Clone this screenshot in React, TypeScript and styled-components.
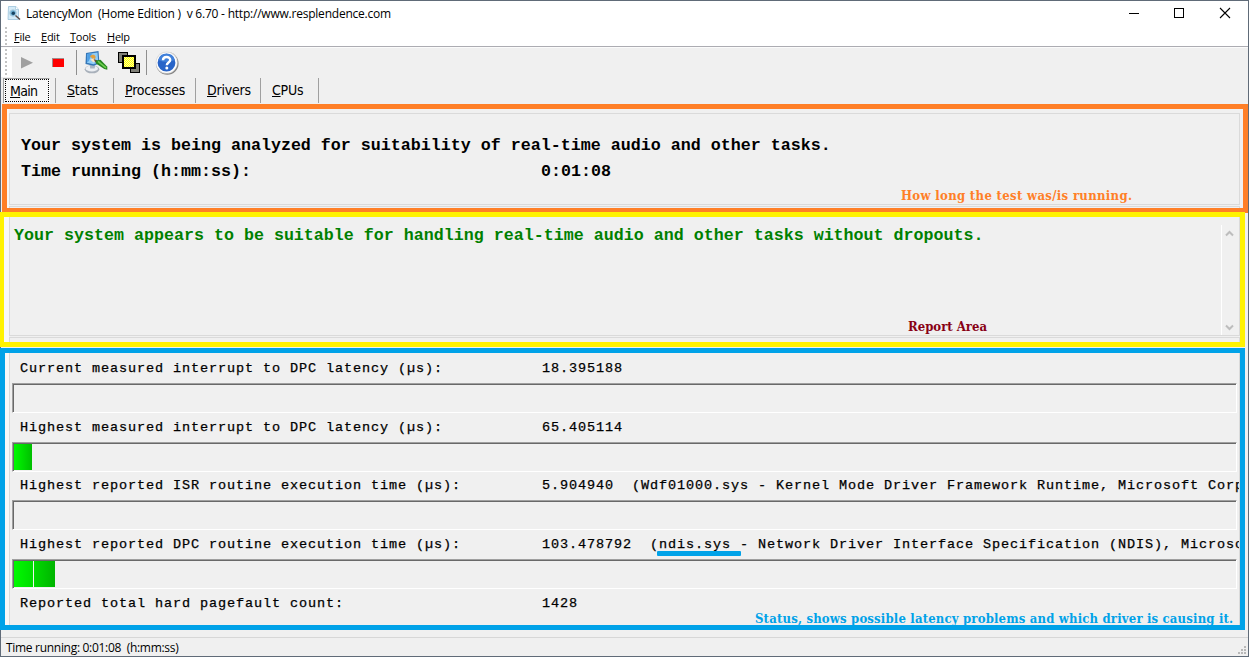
import React from "react";
import styled, { createGlobalStyle } from "styled-components";

const ui = `"Open Sans", "Noto Sans", sans-serif`;
const tahoma = `"DejaVu Sans Condensed", "DejaVu Sans", sans-serif`;
const mono = `"Liberation Mono", monospace`;
const serif = `"DejaVu Serif Condensed", "DejaVu Serif", serif`;

const Global = createGlobalStyle`
  * { box-sizing: border-box; }
  body { margin: 0; overflow: hidden; }
`;

const Window = styled.div`
  width: 1249px;
  height: 657px;
  border: 1px solid #606b78;
  background: #f0f0f0;
  display: flex;
  flex-direction: column;
  color: #000;
  font-family: ${ui};
  svg {
    display: block;
    flex: none;
  }
`;

const TitleBar = styled.div`
  height: 26px;
  flex: none;
  background: #fff;
  display: flex;
  padding-left: 6px;
`;
const AppIcon = styled.svg`
  margin-top: 4px;
`;
const TitleText = styled.span`
  white-space: pre;
  font-size: 12px;
  line-height: 26px;
  letter-spacing: -0.22px;
  margin-left: 5px;
  flex: 1;
`;

const MenuBar = styled.div`
  height: 20px;
  flex: none;
  background: #fff;
  border-bottom: 1px solid #acacb2;
  display: flex;
  padding-left: 4px;
`;
const Gripper = styled.div<{ $h: number }>`
  width: 2px;
  flex: none;
  height: ${(p) => p.$h}px;
  background: repeating-linear-gradient(#c3c3c3 0 2px, transparent 2px 4px);
`;
const MenuItems = styled.div`
  display: flex;
  padding-left: 7px;
`;
const MenuItem = styled.span<{ $w: number }>`
  font-size: 11px;
  letter-spacing: -0.25px;
  line-height: 19px;
  width: ${(p) => p.$w}px;
`;

const ToolBar = styled.div`
  height: 30px;
  display: flex;
  border-top: 1px solid #fbfbfb;
  flex: none;
`;
const GripArea = styled.div`
  width: 11px;
  height: 29px;
  background: #fff;
  padding: 1px 0 0 4px;
`;
const Tool = styled.span<{ $gap: number; $drop: number }>`
  margin-left: ${(p) => p.$gap}px;
  margin-top: ${(p) => p.$drop}px;
`;
const ToolDivider = styled.span<{ $gap: number }>`
  width: 1px;
  height: 25px;
  margin: 2px 0 0 ${(p) => p.$gap}px;
  background: #8f8f8f;
`;

const TabRow = styled.div`
  height: 27px;
  display: flex;
  padding: 1px 0 0 2px;
  flex: none;
  font-family: ${tahoma};
  font-size: 14px;
  letter-spacing: -0.22px;
`;
const Tab = styled.div<{ $w: number }>`
  width: ${(p) => p.$w}px;
  height: 25px;
  padding-left: 11px;
  border-right: 1px solid #a0a0a0;
  line-height: 24px;
`;
const TabGap = styled.div`
  width: 6px;
  height: 25px;
  border-right: 1px solid #a0a0a0;
`;
const ActiveTab = styled.div`
  width: 47px;
  height: 25px;
  border-left: 1px solid #a0a0a0;
  border-top: 1px solid #a0a0a0;
  border-right: 1px solid #fff;
  background: #f8f8f8;
  padding-left: 1px;
  line-height: 23px;
  letter-spacing: -0.7px;
`;
const Focus = styled.div`
  border: 1px dotted #000;
  height: 23px;
  padding-left: 4px;
`;

const Frame = styled.section<{
  $color: string;
  $left: number;
  $edge: number;
  $w: number;
  $h: number;
  $gap: number;
}>`
  position: relative;
  flex: none;
  width: ${(p) => p.$w}px;
  height: ${(p) => p.$h}px;
  margin-left: ${(p) => p.$left - 1}px;
  margin-top: ${(p) => p.$gap}px;
  border: 5px solid ${(p) => p.$color};
  border-left-width: ${(p) => p.$edge}px;
  display: flex;
  flex-direction: column;
  padding-left: ${(p) => 9 - p.$left - p.$edge}px;
  background: linear-gradient(90deg, #f8f8f8 ${(p) => 9 - p.$left - p.$edge}px, #f0f0f0 0);
`;
const Panel = styled.div<{ $h: number; $edges: string; $gap?: number }>`
  width: 1231px;
  height: ${(p) => p.$h}px;
  margin-top: ${(p) => p.$gap ?? 0}px;
  border-style: solid;
  border-color: #dadada;
  border-width: ${(p) => p.$edges};
  flex: none;
  display: flex;
  flex-direction: column;
`;
const Note = styled.div<{ $color: string; $x: number; $y: number; $spacing: number }>`
  position: absolute;
  left: ${(p) => p.$x}px;
  top: ${(p) => p.$y}px;
  white-space: nowrap;
  font: bold 13px/16px ${serif};
  letter-spacing: ${(p) => p.$spacing}px;
  color: ${(p) => p.$color};
`;
const BigLine = styled.div<{ $color?: string }>`
  display: flex;
  font: bold 16.67px/26px ${mono};
  color: ${(p) => p.$color ?? "#000"};
  white-space: pre;
`;
const BigLabel = styled.span`
  width: 520px;
`;
const Summary = styled.div`
  padding: 19px 0 0 11px;
`;
const Report = styled.div`
  display: flex;
  justify-content: space-between;
  padding: 6px 0 0 4px;
`;
const ScrollBar = styled.div`
  margin-top: 2px;
  width: 18px;
  height: 110px;
  border-left: 1px solid #fff;
  display: flex;
  flex-direction: column;
  justify-content: space-between;
  padding: 5px 0 4px 3px;
`;

const Reading = styled.div<{ $h: number; $line: number }>`
  height: ${(p) => p.$h}px;
  flex: none;
  display: flex;
  padding-left: 10px;
  white-space: pre;
  font: 13.5px/${(p) => p.$line}px ${mono};
  letter-spacing: 0.898px;
  -webkit-text-stroke: 0.25px #000;
`;
const ReadingLabel = styled.span`
  width: 522px;
  flex: none;
`;
const Value = styled.span`
  flex: 1;
  min-width: 0;
  overflow: hidden;
`;
const Meter = styled.div`
  flex: none;
  width: 1225px;
  height: 30px;
  margin-left: 2px;
  border: 1px solid #fff;
  border-top-color: #a0a0a0;
  border-left-color: #a0a0a0;
  box-shadow: inset 1px 1px 0 #696969;
  padding: 1px 0 1px 1px;
  display: flex;
  gap: 1px;
`;
const Block = styled.div<{ $w: number; $from: string; $to: string }>`
  width: ${(p) => p.$w}px;
  background: linear-gradient(90deg, ${(p) => p.$from}, ${(p) => p.$to});
`;
const Marker = styled.div`
  position: absolute;
  left: 652px;
  top: 198px;
  width: 84px;
  height: 5px;
  border-radius: 1px;
  background: #00a2e8;
`;
const StatusBar = styled.div`
  margin-top: 7px;
  height: 19px;
  border-top: 1px solid #d7d7d7;
  display: flex;
  justify-content: space-between;
  align-items: flex-start;
  padding: 0 2px 0 5px;
  font-size: 12px;
  line-height: 20px;
  letter-spacing: -0.3px;
  white-space: pre;
`;
const Grip = styled.svg`
  margin-top: 8px;
`;

const LogoIcon = () => (
  <AppIcon width="14" height="16" viewBox="0 0 14 16">
    <path d="M1.500 1.500h7.500l2.500 3v10h-10.500z" fill="#d4ebf8" stroke="#9cc3da" strokeWidth=".8" />
    <path d="M8.500 1.500v3h3" fill="#fff" stroke="#9fc4d8" strokeWidth=".7" />
    <circle cx="6" cy="8" r="3.300" fill="#6fb0d4" stroke="#b7d3e2" />
    <circle cx="6.300" cy="8.300" r="1.700" fill="#17425f" />
    <path d="M8.500 10.500l4.500 4" stroke="#5a4a46" strokeWidth="1.500" />
  </AppIcon>
);

const MinimizeIcon = () => (
  <svg width="46" height="26" viewBox="0 0 46 26" shapeRendering="crispEdges">
    <path d="M19 12.500h10" stroke="#000" />
  </svg>
);
const MaximizeIcon = () => (
  <svg width="46" height="26" viewBox="0 0 46 26" shapeRendering="crispEdges">
    <path d="M18.500 7.500h9v9h-9z" stroke="#000" fill="none" />
  </svg>
);
const CloseIcon = () => (
  <svg width="46" height="26" viewBox="0 0 46 26">
    <path d="M18 7l10 10M28 7l-10 10" stroke="#000" strokeWidth="1.100" />
  </svg>
);

const PlayIcon = () => (
  <svg width="12" height="12" viewBox="0 0 12 12">
    <path d="M0 0L12 5.700L0 11.500z" fill="#a0a0a0" />
  </svg>
);
const StopIcon = () => (
  <svg width="12" height="9" viewBox="0 0 12 9" shapeRendering="crispEdges">
    <path d="M0 0h12v9h-12z" fill="#a08c8c" />
    <path d="M1 1h11v8h-11z" fill="#f00" />
  </svg>
);
const ComputerIcon = () => (
  <svg width="24" height="23" viewBox="0 0 24 23">
    <ellipse cx="8" cy="18.300" rx="7.300" ry="4" fill="#a9b1bb" />
    <ellipse cx="7.800" cy="17.500" rx="6.200" ry="3" fill="#eceff3" />
    <path d="M5.500 12h6l-.8 5.500h-4.500z" fill="#a9b6c4" />
    <path d="M2 2l12.500-2l1 12.500l-6 2.200l-8-1.700z" fill="#3477b8" />
    <path d="M3.200 3l10.300-1.500l.8 10l-5 1.700l-6.300-1.400z" fill="#8fcdf8" />
    <path d="M3.200 3l5-.7l-3.500 8l-1.600 1z" fill="#4f9fe4" />
    <path d="M6 5.500c1-2.500 5-2.500 5.500 0c.5 2-1 3-2.500 2.500z" fill="#e0a040" />
    <path d="M6.300 8.500l3.500-1l2 2l-2.300 2z" fill="#fbe6c4" />
    <path d="M9.500 8l4 1.500l-1.500 2.700z" fill="#604b36" />
    <path d="M12 9.500l4.500-.8l6.800 7v3l-3-.7l-8.300-5.500z" fill="#26871f" />
    <path d="M14 10.300l8 6.500" stroke="#6fd050" strokeWidth="1.600" />
  </svg>
);

const checks: [number, number][] = [];
for (let y = 0; y < 10; y += 1) {
  for (let x = y % 2; x < 10; x += 2) checks.push([x, y]);
}
const WindowsIcon = () => (
  <svg width="22" height="21" viewBox="0 0 22 21" shapeRendering="crispEdges">
    <path d="M0 0h10v11h-10zM12 11h10v10h-10z" fill="#000" />
    <path d="M1 1h8v9h-8zM13 12h8v8h-8z" fill="#808078" />
    <path d="M4 3h14v14h-14z" fill="#000" />
    <path d="M6 5h10v10h-10z" fill="#ffff00" />
    {checks.map(([x, y]) => (
      <rect key={`${x}-${y}`} x={6 + x} y={5 + y} width="1" height="1" fill="#ffffa0" />
    ))}
  </svg>
);
const HelpIcon = () => (
  <svg width="24" height="24" viewBox="0 0 24 24">
    <circle cx="12.300" cy="12.400" r="11.300" fill="#858585" />
    <circle cx="11.600" cy="11.600" r="11" fill="#dedede" />
    <circle cx="11.700" cy="11.700" r="10.200" fill="#fff" />
    <circle cx="11.500" cy="11.700" r="8.900" fill="#2864c8" />
    <path d="M3.300 9a8.500 8.500 0 0 1 16.500 0q-8 4-16.500 0z" fill="#4080da" />
    <path
      d="M8 9.300c0-4.400 7.200-4.200 7.200-.3c0 2.600-3.400 2.500-3.400 5.200"
      fill="none"
      stroke="#fff"
      strokeWidth="2.400"
    />
    <circle cx="11.800" cy="17" r="1.500" fill="#fff" />
  </svg>
);

const ArrowUp = () => (
  <svg width="9" height="7" viewBox="0 0 9 7">
    <path d="M1 5.500l3.500-3.500l3.500 3.500" fill="none" stroke="#bdbdbd" strokeWidth="2" />
  </svg>
);
const ArrowDown = () => (
  <svg width="9" height="7" viewBox="0 0 9 7">
    <path d="M1 1.500l3.500 3.500l3.500-3.500" fill="none" stroke="#bdbdbd" strokeWidth="2" />
  </svg>
);

const menus = [
  { label: "File", w: 27 },
  { label: "Edit", w: 29 },
  { label: "Tools", w: 37 },
  { label: "Help", w: 30 },
];
const tabs = [
  { label: "Stats", w: 58 },
  { label: "Processes", w: 82 },
  { label: "Drivers", w: 65 },
  { label: "CPUs", w: 58 },
];

interface Row {
  label: string;
  value: string;
  h: number;
  line: number;
  blocks?: { w: number; from: string; to: string }[];
}
const rows: Row[] = [
  { label: "Current measured interrupt to DPC latency (µs):", value: "18.395188", h: 30, line: 31, blocks: [] },
  {
    label: "Highest measured interrupt to DPC latency (µs):",
    value: "65.405114",
    h: 29,
    line: 29,
    blocks: [{ w: 18, from: "#00fa00", to: "#00be00" }],
  },
  {
    label: "Highest reported ISR routine execution time (µs):",
    value: "5.904940  (Wdf01000.sys - Kernel Mode Driver Framework Runtime, Microsoft Corp",
    h: 28,
    line: 27,
    blocks: [],
  },
  {
    label: "Highest reported DPC routine execution time (µs):",
    value: "103.478792  (ndis.sys - Network Driver Interface Specification (NDIS), Microso",
    h: 29,
    line: 29,
    blocks: [
      { w: 19, from: "#00fa00", to: "#00dc00" },
      { w: 21, from: "#00da00", to: "#00b400" },
    ],
  },
  { label: "Reported total hard pagefault count:", value: "1428", h: 29, line: 29 },
];

const Mnemonic = ({ text }: { text: string }) => (
  <>
    <u>{text[0]}</u>
    {text.slice(1)}
  </>
);

export default function App() {
  return (
    <>
      <Global />
      <Window>
        <TitleBar>
          <LogoIcon />
          <TitleText>{"LatencyMon  (Home Edition )  v 6.70 - http://www.resplendence.com"}</TitleText>
          <MinimizeIcon />
          <MaximizeIcon />
          <CloseIcon />
        </TitleBar>
        <MenuBar>
          <Gripper $h={18} />
          <MenuItems>
            {menus.map((m) => (
              <MenuItem key={m.label} $w={m.w}>
                <Mnemonic text={m.label} />
              </MenuItem>
            ))}
          </MenuItems>
        </MenuBar>
        <ToolBar>
          <GripArea>
            <Gripper $h={28} />
          </GripArea>
          <Tool $gap={9} $drop={9}><PlayIcon /></Tool>
          <Tool $gap={19} $drop={10}><StopIcon /></Tool>
          <ToolDivider $gap={12} />
          <Tool $gap={7} $drop={3}><ComputerIcon /></Tool>
          <Tool $gap={10} $drop={4}><WindowsIcon /></Tool>
          <ToolDivider $gap={6} />
          <Tool $gap={8} $drop={3}><HelpIcon /></Tool>
        </ToolBar>
        <TabRow>
          <ActiveTab>
            <Focus>
              <Mnemonic text="Main" />
            </Focus>
          </ActiveTab>
          <TabGap />
          {tabs.map((t) => (
            <Tab key={t.label} $w={t.w}>
              <Mnemonic text={t.label} />
            </Tab>
          ))}
        </TabRow>

        <Frame $color="#ff7f27" $left={2} $edge={5} $w={1246} $h={109} $gap={0}>
          <Panel $gap={4} $h={92} $edges="1px">
            <Summary>
              <BigLine>Your system is being analyzed for suitability of real-time audio and other tasks.</BigLine>
              <BigLine>
                <BigLabel>Time running (h:mm:ss):</BigLabel>
                <span>0:01:08</span>
              </BigLine>
            </Summary>
          </Panel>
          <Panel $gap={1} $h={2} $edges="1px 1px 0" />
          <Note $color="#ff7f27" $x={894} $y={79} $spacing={0.32}>
            How long the test was/is running.
          </Note>
        </Frame>

        <Frame $color="#fff200" $left={0} $edge={4} $w={1245} $h={135} $gap={-1}>
          <Panel $h={119} $edges="0 1px 1px">
            <Report>
              <BigLine $color="#008000">
                Your system appears to be suitable for handling real-time audio and other tasks without dropouts.
              </BigLine>
              <ScrollBar>
                <ArrowUp />
                <ArrowDown />
              </ScrollBar>
            </Report>
          </Panel>
          <Panel $gap={1} $h={5} $edges="1px 1px 0" />
          <Note $color="#880015" $x={904} $y={102} $spacing={0}>
            Report Area
          </Note>
        </Frame>

        <Frame $color="#00a2e8" $left={0} $edge={5} $w={1245} $h={282} $gap={1}>
          <Panel $h={272} $edges="0 1px">
            {rows.map((r) => (
              <React.Fragment key={r.label}>
                <Reading $h={r.h} $line={r.line}>
                  <ReadingLabel>{r.label}</ReadingLabel>
                  <Value>{r.value}</Value>
                </Reading>
                {r.blocks && (
                  <Meter>
                    {r.blocks.map((b) => (
                      <Block key={b.from} $w={b.w} $from={b.from} $to={b.to} />
                    ))}
                  </Meter>
                )}
              </React.Fragment>
            ))}
          </Panel>
          <Marker />
          <Note $color="#00a2e8" $x={750} $y={258} $spacing={0.17}>
            Status, shows possible latency problems and which driver is causing it.
          </Note>
        </Frame>

        <StatusBar>
          <span>{"Time running: 0:01:08  (h:mm:ss)"}</span>
          <Grip width="8" height="8" viewBox="0 0 8 8" shapeRendering="crispEdges">
            <path
              d="M6 0h2v2h-2zM3 3h2v2h-2zM6 3h2v2h-2zM0 6h2v2h-2zM3 6h2v2h-2zM6 6h2v2h-2z"
              fill="#b8b8b8"
            />
          </Grip>
        </StatusBar>
      </Window>
    </>
  );
}
